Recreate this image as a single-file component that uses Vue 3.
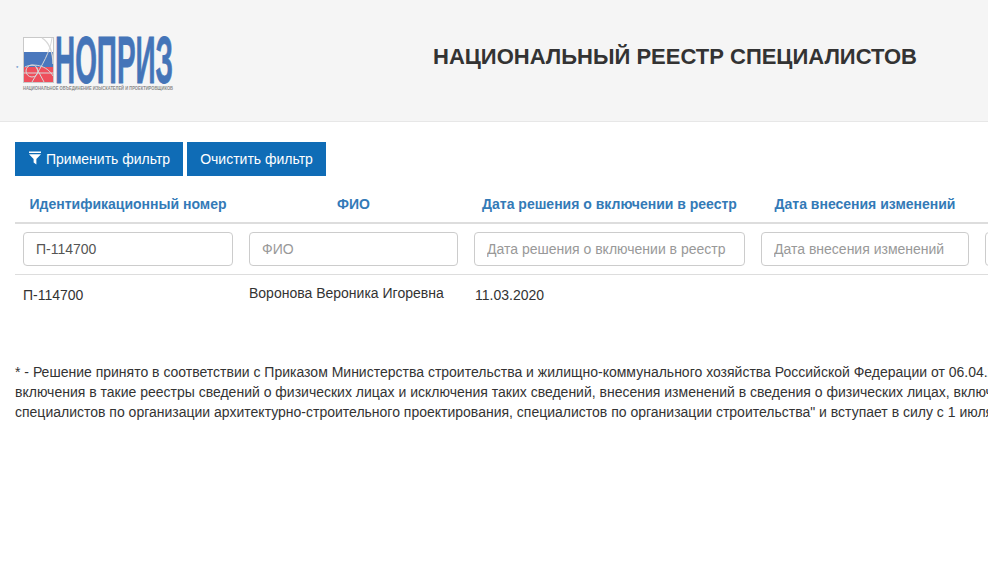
<script setup>
const columns = [
  { title: 'Идентификационный номер', value: 'П-114700', placeholder: 'Идентификационный номер' },
  { title: 'ФИО', value: '', placeholder: 'ФИО' },
  { title: 'Дата решения о включении в реестр', value: '', placeholder: 'Дата решения о включении в реестр' },
  { title: 'Дата внесения изменений', value: '', placeholder: 'Дата внесения изменений' },
  { title: 'Дата исключения', value: '', placeholder: 'Дата исключения' }
]
const row = ['П-114700', 'Воронова Вероника Игоревна', '11.03.2020', '', '']
const notes = [
  '* - Решение принято в соответствии с Приказом Министерства строительства и жилищно-коммунального хозяйства Российской Федерации от 06.04.2017 г. № 688/пр "О порядке ведения национальных реестров специалистов в области инженерных изысканий и архитектурно-строительного проектирования, в области строительства',
  'включения в такие реестры сведений о физических лицах и исключения таких сведений, внесения изменений в сведения о физических лицах, включенные в такие реестры, а также о перечне направлений подготовки, специальностей в области строительства',
  'специалистов по организации архитектурно-строительного проектирования, специалистов по организации строительства" и вступает в силу с 1 июля 2017 года.'
]
</script>

<template>
  <div class="page">
    <header class="header">
      <div class="brand">
        <span class="mark">*</span>
        <svg class="logo" width="152" height="56" viewBox="0 0 152 56" aria-label="НОПРИЗ">
          <rect x="0" y="1" width="31" height="15" fill="#ffffff" />
          <rect x="0" y="16" width="31" height="15" fill="#4a78bd" />
          <rect x="0" y="31" width="31" height="16" fill="#ee4f5c" />
          <rect x="0.5" y="1.5" width="30" height="45" fill="none" stroke="#c9c9c9" />
          <path d="M29 2C27 16 20 28 9 46M2 31c8-4 22-2 28 9M0 37h31M13 31l8 15" fill="none" stroke="#d8d8d8" stroke-width="1" />
          <circle cx="9" cy="35" r="6" fill="none" stroke="#d8d8d8" />
          <path d="M19 2c7 4 11 14 11 26" fill="none" stroke="#d8d8d8" stroke-width="1.4" />
          <text class="logo-name" x="32" y="47" textLength="118" lengthAdjust="spacingAndGlyphs">НОПРИЗ</text>
          <text class="logo-sub" x="0" y="53.5" textLength="150" lengthAdjust="spacingAndGlyphs">НАЦИОНАЛЬНОЕ ОБЪЕДИНЕНИЕ ИЗЫСКАТЕЛЕЙ И ПРОЕКТИРОВЩИКОВ</text>
        </svg>
      </div>
      <h1 class="title">НАЦИОНАЛЬНЫЙ РЕЕСТР СПЕЦИАЛИСТОВ</h1>
    </header>

    <main class="content">
      <div class="actions">
        <button class="btn" type="button">
          <svg class="funnel" width="12" height="14" viewBox="0 0 13 14">
            <path d="M0 0h13v1.6H0zM0 3h13L8 8.2V14L5 12V8.2z" fill="#ffffff" />
          </svg>
          Применить фильтр
        </button>
        <button class="btn" type="button">Очистить фильтр</button>
      </div>

      <div class="grid">
        <div v-for="c in columns" :key="c.title" class="cell head">{{ c.title }}</div>
        <div v-for="c in columns" :key="c.placeholder" class="cell filter">
          <input class="field" :value="c.value" :placeholder="c.placeholder" />
        </div>
        <div v-for="(v, i) in row" :key="i" class="cell data" :class="'data-' + i">{{ v }}</div>
      </div>

      <div class="notes">
        <p v-for="n in notes" :key="n" class="note">{{ n }}</p>
      </div>
    </main>
  </div>
</template>

<style scoped>
.page {
  width: 988px;
  height: 567px;
  overflow: hidden;
  background: #ffffff;
  font-family: "Liberation Sans", Arial, sans-serif;
  color: #333333;
}
.header {
  height: 121px;
  background: #f5f5f5;
  border-bottom: 1px solid #e7e7e7;
  display: flex;
  align-items: center;
}
.brand {
  width: 361px;
  height: 121px;
  display: flex;
  align-items: flex-start;
  flex: none;
  padding-top: 36px;
  box-sizing: border-box;
}
.mark {
  font-size: 6px;
  line-height: 8px;
  color: #4a78bd;
  width: 23px;
  padding: 28px 0 0 16px;
  box-sizing: border-box;
}
.logo {
  display: block;
  flex: none;
  overflow: visible;
}
.logo-name {
  font-family: "Liberation Sans", Arial, sans-serif;
  font-weight: 700;
  font-size: 66px;
  fill: #4474b8;
  stroke: #4474b8;
  stroke-width: 0.8px;
}
.logo-sub {
  font-family: "Liberation Sans", Arial, sans-serif;
  font-size: 5px;
  font-weight: 700;
  fill: #8a8a8a;
}
.title {
  margin: 0 0 7px 72px;
  font-size: 22px;
  line-height: 24px;
  font-weight: 700;
  white-space: nowrap;
  color: #333333;
}
.content {
  padding: 20px 0 0 15px;
}
.actions {
  display: flex;
  gap: 4px;
}
.btn {
  height: 34px;
  padding: 0 13px 0 14px;
  border: 0;
  background: #0f6cb6;
  color: #ffffff;
  font: 14px/20px "Liberation Sans", Arial, sans-serif;
  display: flex;
  align-items: center;
  gap: 5px;
}
.btn:last-child {
  padding: 0 13px;
}
.funnel {
  margin-bottom: 2px;
}
.grid {
  display: grid;
  grid-template-columns: 226px 225px 287px 224px 224px;
  width: 1186px;
}
.cell {
  box-sizing: border-box;
  padding: 0 8px;
}
.head {
  height: 48px;
  padding-top: 9px;
  border-bottom: 2px solid #dddddd;
  font-size: 14px;
  font-weight: 700;
  color: #337ab7;
  display: flex;
  align-items: center;
  justify-content: center;
  white-space: nowrap;
}
.filter {
  height: 51px;
  padding-top: 8px;
  border-bottom: 1px solid #dddddd;
}
.field {
  display: block;
  width: 100%;
  height: 34px;
  box-sizing: border-box;
  padding: 6px 12px;
  border: 1px solid #cccccc;
  border-radius: 4px;
  background: #ffffff;
  color: #555555;
  font: 14px/20px "Liberation Sans", Arial, sans-serif;
  outline: none;
}
.field::placeholder {
  color: #999999;
  opacity: 1;
}
.data {
  font-size: 14px;
  line-height: 20px;
  white-space: nowrap;
  padding-top: 10px;
  height: 56px;
}
.data-1 {
  padding-top: 8px;
}
.data-2 {
  padding-left: 9px;
}
.notes {
  margin-top: 31px;
}
.note {
  margin: 0;
  font-size: 14px;
  line-height: 20px;
  white-space: nowrap;
  color: #333333;
}
</style>
